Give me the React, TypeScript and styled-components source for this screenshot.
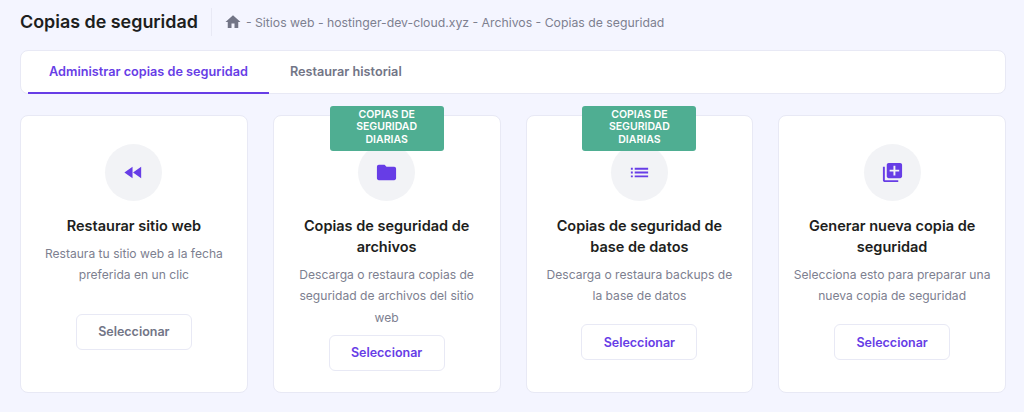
import React from 'react';
import styled, { createGlobalStyle } from 'styled-components';
import { MdFastRewind, MdFolder, MdHome, MdLibraryAdd, MdList } from 'react-icons/md';

const GlobalStyle = createGlobalStyle`
  html, body {
    margin: 0;
    padding: 0;
    background: #f4f5ff;
    font-family: 'Inter', 'Liberation Sans', sans-serif;
  }
  * {
    box-sizing: border-box;
  }
`;

const Page = styled.div`
  width: 1024px;
  height: 412px;
  overflow: hidden;
  padding: 8px 18px 0 20px;
`;

const Header = styled.header`
  display: flex;
  align-items: center;
  height: 28px;
  margin-bottom: 14px;
`;

const Title = styled.h1`
  margin: 0;
  padding-right: 13px;
  height: 28px;
  line-height: 28px;
  font-size: 17.9px;
  font-weight: 600;
  color: #1d1e20;
  border-right: 1px solid #e8e9f5;
`;

const Breadcrumbs = styled.div`
  display: flex;
  align-items: center;
  margin-left: 12px;
  font-size: 12.26px;
  color: #7d8090;
  white-space: nowrap;

  svg {
    font-size: 18px;
    margin-right: 4px;
    color: #727586;
  }
`;

const Tabs = styled.nav`
  display: flex;
  height: 44px;
  padding-left: 7px;
  background: #fff;
  border: 1px solid #e8e9f5;
  border-radius: 8px;
  margin-bottom: 21px;
`;

const Tab = styled.div<{ $active?: boolean }>`
  display: flex;
  align-items: center;
  padding: 0 21px;
  height: 43px;
  font-size: 12.7px;
  font-weight: 600;
  color: ${(props) => (props.$active ? '#673de6' : '#727586')};
  border-bottom: 2px solid ${(props) => (props.$active ? '#673de6' : 'transparent')};
`;

const Grid = styled.div`
  display: grid;
  grid-template-columns: repeat(4, 1fr);
  gap: 25px;
`;

const Card = styled.section`
  position: relative;
  height: 278px;
  padding: 28px 14.3px 14px;
  display: flex;
  flex-direction: column;
  align-items: center;
  text-align: center;
  background: #fff;
  border: 1px solid #e8e9f5;
  border-radius: 8px;
`;

const Badge = styled.div`
  position: absolute;
  top: -10px;
  left: 50%;
  transform: translateX(-50%);
  width: 114px;
  height: 45px;
  padding: 3px 20px 0;
  background: #4fae92;
  border-radius: 3px;
  color: #fff;
  font-size: 10.5px;
  font-weight: 600;
  line-height: 12.3px;
  z-index: 1;
`;

const IconCircle = styled.div`
  width: 57px;
  height: 57px;
  flex: none;
  display: flex;
  align-items: center;
  justify-content: center;
  border-radius: 50%;
  background: #f2f3f6;
  color: #673de6;
  font-size: 23px;
  margin-bottom: 14px;
`;

const CardTitle = styled.h2`
  margin: 0 0 7px;
  font-size: 14.5px;
  line-height: 21px;
  font-weight: 600;
  color: #1d1e20;
`;

const Description = styled.p`
  margin: 0;
  font-size: 12.1px;
  line-height: 21.3px;
  color: #7d8090;
`;

// the button sits centred in whatever height the text leaves free
const SelectButton = styled.button<{ $muted?: boolean }>`
  width: 116px;
  height: 36px;
  flex: none;
  margin: auto 0;
  padding: 0;
  font-family: inherit;
  font-size: 12.5px;
  font-weight: 600;
  background: #fff;
  border: 1px solid #e8e9f5;
  border-radius: 6px;
  color: ${(props) => (props.$muted ? '#727586' : '#673de6')};
`;

const cards = [
  {
    icon: <MdFastRewind />,
    title: 'Restaurar sitio web',
    description: 'Restaura tu sitio web a la fecha preferida en un clic',
    muted: true,
  },
  {
    icon: <MdFolder />,
    title: 'Copias de seguridad de archivos',
    description: 'Descarga o restaura copias de seguridad de archivos del sitio web',
    badge: 'COPIAS DE SEGURIDAD DIARIAS',
  },
  {
    icon: <MdList />,
    title: 'Copias de seguridad de base de datos',
    description: 'Descarga o restaura backups de la base de datos',
    badge: 'COPIAS DE SEGURIDAD DIARIAS',
  },
  {
    icon: <MdLibraryAdd />,
    title: 'Generar nueva copia de seguridad',
    description: 'Selecciona esto para preparar una nueva copia de seguridad',
  },
];

export default function App() {
  return (
    <Page>
      <GlobalStyle />
      <Header>
        <Title>Copias de seguridad</Title>
        <Breadcrumbs>
          <MdHome />
          - Sitios web - hostinger-dev-cloud.xyz - Archivos - Copias de seguridad
        </Breadcrumbs>
      </Header>
      <Tabs>
        <Tab $active>Administrar copias de seguridad</Tab>
        <Tab>Restaurar historial</Tab>
      </Tabs>
      <Grid>
        {cards.map((card) => (
          <Card key={card.title}>
            {card.badge && <Badge>{card.badge}</Badge>}
            <IconCircle>{card.icon}</IconCircle>
            <CardTitle>{card.title}</CardTitle>
            <Description>{card.description}</Description>
            <SelectButton $muted={card.muted}>Seleccionar</SelectButton>
          </Card>
        ))}
      </Grid>
    </Page>
  );
}
